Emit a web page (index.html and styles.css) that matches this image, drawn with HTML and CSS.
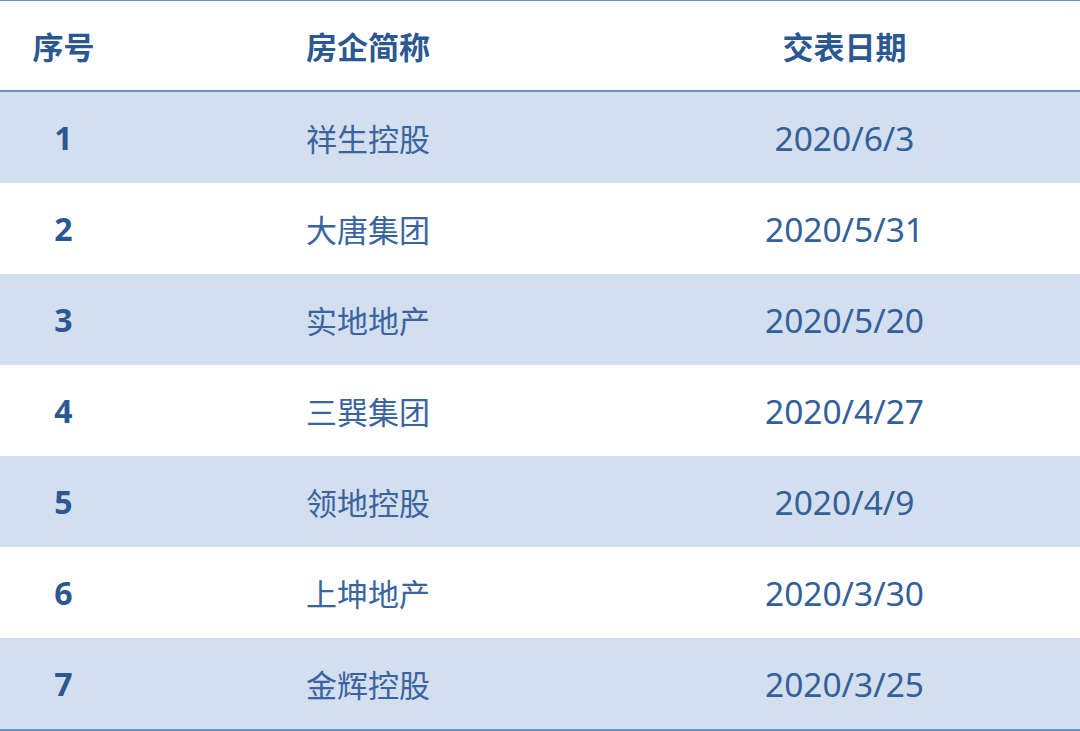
FILE: index.html
```html
<!DOCTYPE html>
<html lang="zh">
<head>
<meta charset="utf-8">
<link rel="stylesheet" href="styles.css">
</head>
<body>
<table class="tbl">
  <colgroup>
    <col class="c1"><col class="c2"><col class="c3">
  </colgroup>
  <thead>
    <tr><th>序号</th><th>房企简称</th><th>交表日期</th></tr>
  </thead>
  <tbody>
    <tr class="alt"><td class="num">1</td><td>祥生控股</td><td class="date">2020/6/3</td></tr>
    <tr><td class="num">2</td><td>大唐集团</td><td class="date">2020/5/31</td></tr>
    <tr class="alt"><td class="num">3</td><td>实地地产</td><td class="date">2020/5/20</td></tr>
    <tr><td class="num">4</td><td>三巽集团</td><td class="date">2020/4/27</td></tr>
    <tr class="alt"><td class="num">5</td><td>领地控股</td><td class="date">2020/4/9</td></tr>
    <tr><td class="num">6</td><td>上坤地产</td><td class="date">2020/3/30</td></tr>
    <tr class="alt"><td class="num">7</td><td>金辉控股</td><td class="date">2020/3/25</td></tr>
  </tbody>
</table>
</body>
</html>
```

FILE: styles.css
```css
html, body {
  margin: 0;
  padding: 0;
  background: #ffffff;
}
.tbl {
  width: 1080px;
  border-collapse: collapse;
  table-layout: fixed;
  font-family: "Noto Sans CJK SC", "Noto Sans", sans-serif;
  color: #2f5b92;
  border-top: 1px solid #6a93cc;
  border-bottom: 2px solid #6a93cc;
}
.c1 { width: 127px; }
.c2 { width: 482px; }
.c3 { width: 471px; }
.tbl th {
  height: 89px;
  padding: 0;
  font-size: 31px;
  font-weight: bold;
  color: #2b5890;
  text-align: center;
  border-bottom: 2px solid #6a93cc;
}
.tbl td {
  height: 91px;
  padding: 0;
  font-size: 31px;
  font-weight: normal;
  text-align: center;
  color: #3a64a0;
}
.tbl td.date {
  font-family: "Noto Sans", "Noto Sans CJK SC", sans-serif;
  font-size: 33.5px;
  color: #33609a;
}
.tbl td.num {
  font-family: "Noto Sans", "Noto Sans CJK SC", sans-serif;
  font-size: 32px;
  font-weight: bold;
  color: #2b5890;
}
.tbl tr.alt td {
  background: #d3dfee;
}
```
